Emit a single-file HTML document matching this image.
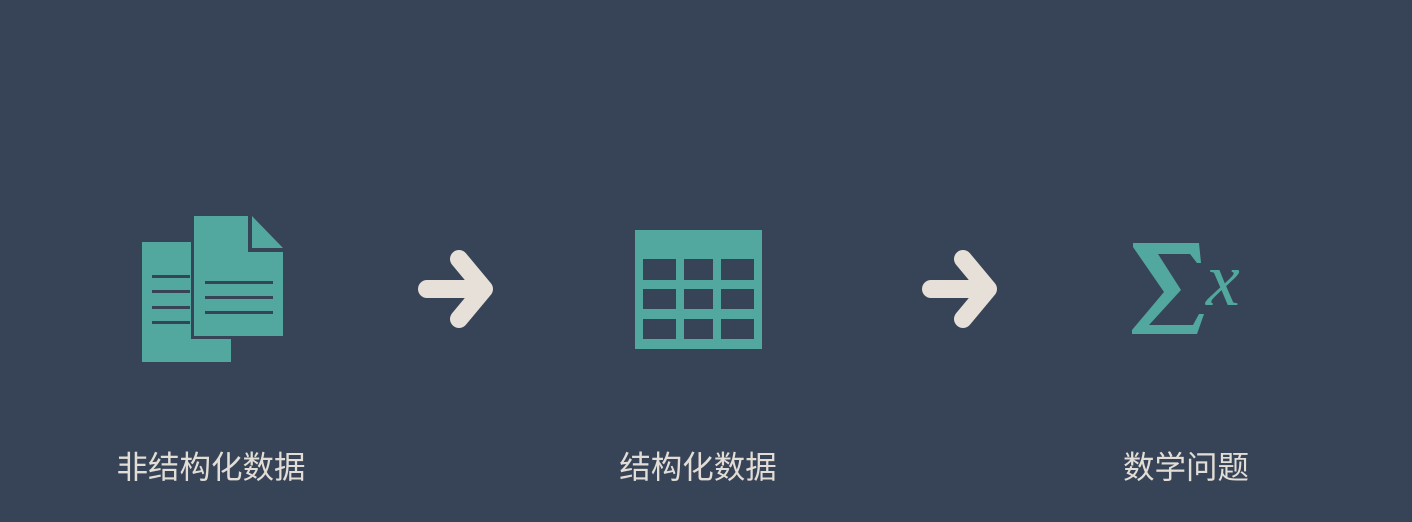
<!DOCTYPE html>
<html><head><meta charset="utf-8"><style>
html,body{margin:0;padding:0;width:1412px;height:522px;background:#374457;overflow:hidden}
.l{position:absolute;top:442px;font-family:"Liberation Sans","Noto Sans CJK SC",sans-serif;font-size:31.5px;color:#e2ddd6;white-space:nowrap;transform:translateX(-50%)}
svg{position:absolute;left:0;top:0}
</style></head><body>
<svg width="1412" height="522" viewBox="0 0 1412 522">
<g fill="#52a89f">
<rect x="142" y="242" width="89" height="120"/>
<path d="M191 213 H249 L286 251 V339 H191 Z" fill="#374457"/>
<path d="M194 216 H248 V252 H283 V336 H194 Z"/>
<path d="M252 216 L283 248 H252 Z"/>
</g>
<g fill="#374457">
<rect x="152" y="275" width="38" height="3"/><rect x="152" y="290" width="38" height="3"/>
<rect x="152" y="306" width="38" height="3"/><rect x="152" y="321" width="38" height="3"/>
<rect x="205" y="281" width="68" height="3"/><rect x="205" y="296" width="68" height="3"/>
<rect x="205" y="311" width="68" height="3"/>
</g>
<g stroke="#e6e0d8" stroke-width="18" stroke-linecap="round" stroke-linejoin="round" fill="none">
<path d="M427 289 H480 M459 259 L484 289 L459 319"/>
<path d="M931 289 H984 M963 259 L988 289 L963 319"/>
</g>
<rect x="635" y="230" width="127" height="119" fill="#52a89f"/>
<g fill="#374457">
<rect x="643" y="259" width="33" height="21"/><rect x="684" y="259" width="29" height="21"/><rect x="721" y="259" width="33" height="21"/>
<rect x="643" y="289" width="33" height="20"/><rect x="684" y="289" width="29" height="20"/><rect x="721" y="289" width="33" height="20"/>
<rect x="643" y="319" width="33" height="20"/><rect x="684" y="319" width="29" height="20"/><rect x="721" y="319" width="33" height="20"/>
</g>
<path fill="#52a89f" d="M1133 243 L1199 243 L1201 263 L1197 263 L1190 254 L1158 254 L1181 290 L1149 325 L1193 325 L1199 314 L1204 314 L1197 334 L1132 334 L1132 330 L1164 292 L1133 247 Z"/>
<text x="1206" y="305" font-family="Liberation Serif,serif" font-style="italic" font-size="76" fill="#52a89f">x</text>
</svg>
<div class="l" style="left:211px">非结构化数据</div>
<div class="l" style="left:698px">结构化数据</div>
<div class="l" style="left:1186px">数学问题</div>
</body></html>
